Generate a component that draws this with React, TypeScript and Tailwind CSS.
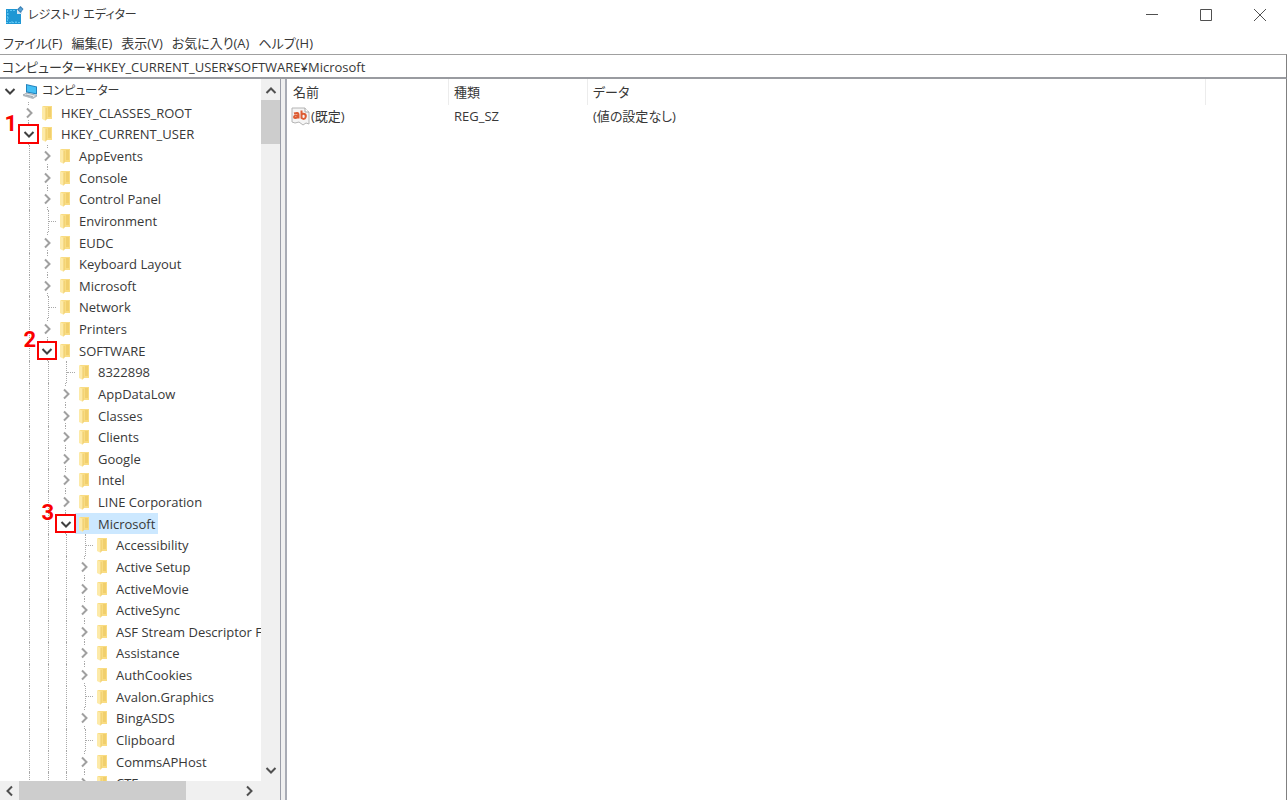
import { useState } from "react";
import type { ReactNode } from "react";
import clsx from "clsx";

type TreeItem = {
  name: string;
  level: number;
  state: "open" | "closed" | "leaf";
  mark?: string;
  selected?: boolean;
};

const menuList = ["ファイル(F)", "編集(E)", "表示(V)", "お気に入り(A)", "ヘルプ(H)"];

const treeList: TreeItem[] = [
  { name: "コンピューター", level: 0, state: "open" },
  { name: "HKEY_CLASSES_ROOT", level: 1, state: "closed" },
  { name: "HKEY_CURRENT_USER", level: 1, state: "open", mark: "1" },
  { name: "AppEvents", level: 2, state: "closed" },
  { name: "Console", level: 2, state: "closed" },
  { name: "Control Panel", level: 2, state: "closed" },
  { name: "Environment", level: 2, state: "leaf" },
  { name: "EUDC", level: 2, state: "closed" },
  { name: "Keyboard Layout", level: 2, state: "closed" },
  { name: "Microsoft", level: 2, state: "closed" },
  { name: "Network", level: 2, state: "leaf" },
  { name: "Printers", level: 2, state: "closed" },
  { name: "SOFTWARE", level: 2, state: "open", mark: "2" },
  { name: "8322898", level: 3, state: "leaf" },
  { name: "AppDataLow", level: 3, state: "closed" },
  { name: "Classes", level: 3, state: "closed" },
  { name: "Clients", level: 3, state: "closed" },
  { name: "Google", level: 3, state: "closed" },
  { name: "Intel", level: 3, state: "closed" },
  { name: "LINE Corporation", level: 3, state: "closed" },
  { name: "Microsoft", level: 3, state: "open", mark: "3", selected: true },
  { name: "Accessibility", level: 4, state: "leaf" },
  { name: "Active Setup", level: 4, state: "closed" },
  { name: "ActiveMovie", level: 4, state: "closed" },
  { name: "ActiveSync", level: 4, state: "closed" },
  { name: "ASF Stream Descriptor File", level: 4, state: "closed" },
  { name: "Assistance", level: 4, state: "closed" },
  { name: "AuthCookies", level: 4, state: "closed" },
  { name: "Avalon.Graphics", level: 4, state: "leaf" },
  { name: "BingASDS", level: 4, state: "closed" },
  { name: "Clipboard", level: 4, state: "leaf" },
  { name: "CommsAPHost", level: 4, state: "closed" },
  { name: "CTF", level: 4, state: "closed" },
];

// 階層ごとの列幅
const levelWidth = ["w-[19px]", "w-[19px]", "w-[18px]", "w-[19px]", "w-[18px]"];

function RegeditIcon() {
  return (
    <svg width="20" height="20" viewBox="0 0 20 20" aria-hidden="true">
      <path d="M2 4h11l4 4v11H2z" fill="#1f97d4" />
      <path
        d="M3.500 5v13M2 17.500h14M8 16v3M12 16v3M3 9h2M3 13h2M6 5.500h5"
        stroke="#5cc4f2"
        strokeWidth="1"
        strokeDasharray="2 1"
        fill="none"
      />
      <path d="M13 4h5v5h-5z" fill="#d9e6f2" />
      <path d="M16.500 1l3 3-3 4-3.500-3.500z" fill="#3d83b8" />
      <circle cx="16.500" cy="4.500" r="1.500" fill="#5aa5d8" />
    </svg>
  );
}

function ComputerIcon() {
  return (
    <svg width="17" height="17" viewBox="0 0 17 17" aria-hidden="true">
      <path d="M4 1l11 2.500v8L4 9.500z" fill="#2583bd" />
      <path d="M5 2.300l9 2v6L5 8.500z" fill="#45c0f5" />
      <path d="M1 12l4-2 10 2.500-4 2.500z" fill="#e3e8ec" stroke="#8d979f" strokeWidth="0.800" />
      <path d="M4 12l7 1.800" stroke="#8d979f" strokeWidth="0.800" />
      <path d="M1 12.500l10 3 4-2.500" stroke="#b5bcc2" fill="none" />
    </svg>
  );
}

function FolderIcon() {
  return (
    <svg width="12" height="16" viewBox="0 0 12 16" aria-hidden="true">
      <path d="M2 1h9v13H2z" fill="#f9dc83" />
      <path d="M7 2h3v10H7z" fill="#f1cf6d" />
      <path d="M1 1l4 2v13l-4-2z" fill="#fdeaa8" />
      <path d="M5 3v12" stroke="#eecb68" />
    </svg>
  );
}

function StringIcon() {
  return (
    <svg width="19" height="19" viewBox="0 0 19 19" aria-hidden="true">
      <path d="M1 1h13l4 4v12l-3-1-3 2-4-3-4 1-3-1z" fill="#f5f5f5" stroke="#b4b4b4" />
      <path d="M14 1v4h4" fill="#fff" stroke="#a6a6a6" />
      <path
        d="M3 6.500q4.500-1.500 4.500 1v4M7.500 8.500q-4.500-.5-4.500 1.500t4.500 0M10.500 3.500v8M10.500 8q1-2 3-1t1 3.500-4 .5"
        fill="none"
        stroke="#dd5c33"
        strokeWidth="2"
      />
    </svg>
  );
}

function Chevron({ direction, className }: { direction: "up" | "down" | "left" | "right"; className?: string }) {
  const paths = {
    up: "M1.500 8L6 3.500 10.500 8",
    down: "M1.500 4L6 8.500 10.500 4",
    left: "M8 1.500L3.500 6 8 10.500",
    right: "M4 1.500L8.500 6 4 10.500",
  };
  return (
    <svg width="12" height="12" viewBox="0 0 12 12" className={className} aria-hidden="true">
      <path d={paths[direction]} fill="none" stroke="currentColor" strokeWidth="2" />
    </svg>
  );
}

function TreeRow({ item, onToggle }: { item: TreeItem; onToggle: () => void }) {
  const width = levelWidth[item.level];
  return (
    <li role="treeitem" aria-level={item.level + 1} aria-selected={!!item.selected} className="flex min-h-0">
      {levelWidth.slice(0, item.level).map((w, i) => (
        <span key={i} className={clsx(w, "flex shrink-0 pl-[10px]")}>
          {i > 0 && <span className="border-l border-dotted border-[#a8a8a8]" />}
        </span>
      ))}
      {item.state === "leaf" ? (
        <span className={clsx(width, "flex shrink-0 pl-[10px]")}>
          <span className="flex flex-1 items-center border-l border-dotted border-[#a8a8a8]">
            <span className="flex-1 border-t border-dotted border-[#a8a8a8]" />
          </span>
        </span>
      ) : (
        <span className={clsx(width, "relative flex shrink-0 flex-col items-center")}>
          <span className={clsx("h-[3px] border-l border-dotted", item.level > 0 ? "border-[#a8a8a8]" : "border-transparent")} />
          <button
            type="button"
            aria-label={item.name}
            aria-expanded={item.state === "open"}
            onClick={onToggle}
            className="flex min-h-0 flex-1 items-center"
          >
            <Chevron
              direction={item.state === "open" ? "down" : "right"}
              className={item.state === "open" ? "text-[#404040]" : "text-[#a0a0a0]"}
            />
          </button>
          <span className={clsx("h-[3px] border-l border-dotted", item.level > 0 ? "border-[#a8a8a8]" : "border-transparent")} />
          {/* 手順番号 */}
          {item.mark && (
            <span className="pointer-events-none absolute inset-y-px -inset-x-px border-2 border-[#fa0000]">
              <span className="absolute right-full bottom-2 mr-[3px] font-[Roboto,sans-serif] text-[22px] leading-5 font-bold text-[#fa0000]">
                {item.mark}
              </span>
            </span>
          )}
        </span>
      )}
      <span
        className={clsx(
          "flex items-center pr-[3px] pl-[3px] whitespace-nowrap",
          item.selected && "bg-[#cce8ff]",
          item.level === 0 && "text-xs"
        )}
      >
        <span className="flex w-5 shrink-0">{item.level === 0 ? <ComputerIcon /> : <FolderIcon />}</span>
        {item.name}
      </span>
    </li>
  );
}

function ScrollButton({ label, children }: { label: string; children: ReactNode }) {
  return (
    <button type="button" aria-label={label} className="flex h-[19px] w-[19px] shrink-0 items-center justify-center text-[#505050]">
      {children}
    </button>
  );
}

export default function App() {
  const [address, setAddress] = useState("コンピューター¥HKEY_CURRENT_USER¥SOFTWARE¥Microsoft");
  const [items, setItems] = useState(treeList);

  const toggle = (index: number) => {
    setItems(
      items.map((item, i) =>
        i === index ? { ...item, state: item.state === "open" ? "closed" : "open" } : item
      )
    );
  };

  return (
    <div className="flex h-screen flex-col overflow-hidden bg-white font-['Open_Sans','Noto_Sans_CJK_JP',sans-serif] text-[13px] leading-5 text-[#383838] [font-feature-settings:'palt']">
      {/* タイトルバー */}
      <header className="flex h-[30px] shrink-0 items-center justify-between pr-5 pl-1">
        <h1 className="flex items-center gap-1 text-xs">
          <RegeditIcon />
          レジストリ エディター
        </h1>
        <div className="flex h-7 items-center gap-10 text-[#505050]">
          <button type="button" aria-label="最小化">
            <svg width="14" height="14" viewBox="0 0 14 14">
              <path d="M1 6.500h12" stroke="currentColor" />
            </svg>
          </button>
          <button type="button" aria-label="最大化">
            <svg width="14" height="14" viewBox="0 0 14 14">
              <path d="M1.500 1.500h11v11h-11z" fill="none" stroke="currentColor" />
            </svg>
          </button>
          <button type="button" aria-label="閉じる">
            <svg width="14" height="14" viewBox="0 0 14 14">
              <path d="M1 1l12 12M13 1L1 13" stroke="currentColor" />
            </svg>
          </button>
        </div>
      </header>

      {/* メニューバー */}
      <nav className="flex h-6 shrink-0 items-center gap-[9px] px-[3px] pt-[2px]">
        {menuList.map((menu) => (
          <button key={menu} type="button" className="whitespace-nowrap">
            {menu}
          </button>
        ))}
      </nav>

      {/* アドレスバー */}
      <input
        type="text"
        aria-label="アドレス"
        value={address}
        onChange={(e) => setAddress(e.target.value)}
        className="h-[25px] w-full shrink-0 border-t border-r border-b-2 border-t-[#a0a0a0] border-r-[#808080] border-b-[#999ba0] px-[2px] outline-none"
      />

      <main className="flex min-h-0 flex-1 bg-[#f0f0f0]">
        {/* キーのツリー */}
        <section className="flex w-[281px] shrink-0 flex-col border-r border-[#9a9da8]">
          <div className="flex min-h-0 flex-1">
            <ul
              role="tree"
              className="grid min-w-0 flex-1 content-start overflow-hidden bg-white pt-px [grid-auto-rows:22px_21px_22px_22px_21px_22px_22px_21px]"
            >
              {items.map((item, i) => (
                <TreeRow key={i} item={item} onToggle={() => toggle(i)} />
              ))}
            </ul>
            <div className="flex w-[19px] flex-col items-center justify-between py-[2px]">
              <div className="w-full">
                <ScrollButton label="上へ">
                  <Chevron direction="up" />
                </ScrollButton>
                <div className="h-11 bg-[#cdcdcd]" />
              </div>
              <ScrollButton label="下へ">
                <Chevron direction="down" />
              </ScrollButton>
            </div>
          </div>
          <div className="flex h-[19px] shrink-0 items-center justify-between pr-[22px]">
            <div className="flex">
              <ScrollButton label="左へ">
                <Chevron direction="left" />
              </ScrollButton>
              <div className="w-[167px] bg-[#cdcdcd]" />
            </div>
            <ScrollButton label="右へ">
              <Chevron direction="right" />
            </ScrollButton>
          </div>
        </section>

        {/* 値の一覧 */}
        <section className="ml-1 min-w-0 flex-1 border-r border-l-2 border-r-[#808080] border-l-[#a9acb5] bg-white">
          <table className="w-full table-fixed border-separate border-spacing-0 text-left">
            <thead>
              <tr className="h-[26px]">
                <th className="w-[162px] border-r border-[#ececec] pl-[6px] font-normal">名前</th>
                <th className="w-[139px] border-r border-[#ececec] pl-[5px] font-normal">種類</th>
                <th className="w-[618px] border-r border-[#ececec] pl-[5px] font-normal">データ</th>
                <th aria-label="余白" />
              </tr>
            </thead>
            <tbody>
              <tr className="h-[22px]">
                <td className="pl-1">
                  <span className="flex items-center gap-px">
                    <StringIcon />
                    (既定)
                  </span>
                </td>
                <td className="pl-[5px]">REG_SZ</td>
                <td className="pl-[5px]">(値の設定なし)</td>
                <td />
              </tr>
            </tbody>
          </table>
        </section>
      </main>
    </div>
  );
}
